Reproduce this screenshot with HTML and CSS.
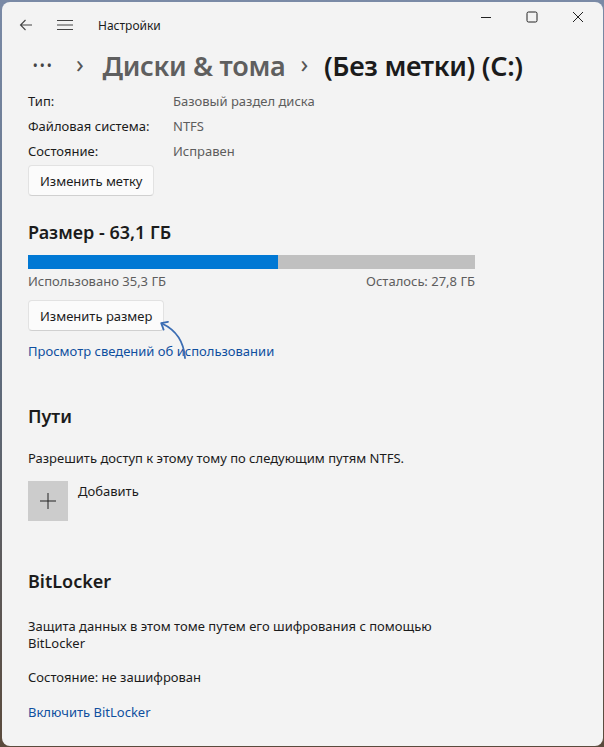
FILE: index.html
```html
<!DOCTYPE html>
<html lang="ru">
<head>
  <meta charset="UTF-8">
  <title>Настройки</title>
  <link rel="stylesheet" href="styles.css">
</head>
<body>
  <div class="window">
    <!-- Title bar -->
    <div class="titlebar">
      <svg class="tb-icon back" width="14" height="14" viewBox="0 0 14 14">
        <path d="M13 7H1.5M6.5 2L1.5 7l5 5" fill="none" stroke="#444" stroke-width="1.1"/>
      </svg>
      <svg class="tb-icon menu" width="16" height="12" viewBox="0 0 16 12">
        <path d="M0 1.5h16M0 6h16M0 10.5h16" fill="none" stroke="#444" stroke-width="1.1"/>
      </svg>
      <span class="app-title">Настройки</span>
      <div class="controls">
        <svg width="12" height="12" viewBox="0 0 12 12"><path d="M1 6.5h10" stroke="#222" stroke-width="1"/></svg>
        <svg width="12" height="12" viewBox="0 0 12 12"><rect x="1" y="1" width="10" height="10" rx="1.5" fill="none" stroke="#222" stroke-width="1"/></svg>
        <svg width="12" height="12" viewBox="0 0 12 12"><path d="M1 1l10 10M11 1L1 11" stroke="#222" stroke-width="1"/></svg>
      </div>
    </div>

    <!-- Breadcrumb -->
    <div class="breadcrumb">
      <span class="dots">•••</span>
      <span class="chev">›</span>
      <span class="crumb">Диски &amp; тома</span>
      <span class="chev chev-last">›</span>
      <span class="crumb current">(Без метки) (C:)</span>
    </div>

    <div class="content">
      <div class="scroll">
        <div class="props">
          <div class="prop"><span class="prop-name">Тип:</span><span class="prop-value">Базовый раздел диска</span></div>
          <div class="prop"><span class="prop-name">Файловая система:</span><span class="prop-value">NTFS</span></div>
          <div class="prop"><span class="prop-name">Состояние:</span><span class="prop-value">Исправен</span></div>
        </div>
        <button class="btn label-btn">Изменить метку</button>

        <h2 class="size-title">Размер - 63,1 ГБ</h2>
        <div class="bar"><div class="bar-used" style="width: 56%"></div></div>
        <div class="bar-labels">
          <span>Использовано 35,3 ГБ</span>
          <span>Осталось: 27,8 ГБ</span>
        </div>
        <div class="resize-row">
          <button class="btn">Изменить размер</button>
          <!-- hand-drawn pointer over the button corner -->
          <svg class="pointer" width="32" height="44" viewBox="0 0 32 44">
            <path d="M27 40C26 26 20 13 4 5.5" fill="none" stroke="#3b6db3" stroke-width="1.8" stroke-linecap="round"/>
            <path d="M10 3.8L3.2 5.2l2.4 6.4" fill="none" stroke="#3b6db3" stroke-width="1.8" stroke-linecap="round" stroke-linejoin="round"/>
          </svg>
        </div>
        <a class="link usage" href="#">Просмотр сведений об использовании</a>

        <h2 class="section">Пути</h2>
        <p class="text">Разрешить доступ к этому тому по следующим путям NTFS.</p>
        <div class="add-row">
          <div class="add-tile">
            <svg width="16" height="16" viewBox="0 0 16 16"><path d="M8 0v16M0 8h16" stroke="#222" stroke-width="1"/></svg>
          </div>
          <span>Добавить</span>
        </div>

        <h2 class="section bitlocker">BitLocker</h2>
        <p class="text">Защита данных в этом томе путем его шифрования с помощью BitLocker</p>
        <p class="text state">Состояние: не зашифрован</p>
        <a class="link enable" href="#">Включить BitLocker</a>
      </div>
    </div>
  </div>
</body>
</html>
```

FILE: styles.css
```css
body {
  margin: 0;
  height: 747px;
  overflow: hidden;
  background: linear-gradient(180deg, #7a8aa6 0%, #5f6e82 45%, #5a4a3c 100%);
  font-family: "Noto Sans", "Open Sans", sans-serif;
  color: #1b1b1b;
}

.window {
  margin: 2px 1px 0 2px;
  height: 744px;
  background: #f3f3f3;
  border-radius: 8px;
  overflow: hidden;
  display: flex;
  flex-direction: column;
}

/* Title bar */
.titlebar {
  height: 46px;
  display: flex;
  align-items: center;
  flex-shrink: 0;
}

.tb-icon {
  flex-shrink: 0;
}

.back {
  margin-left: 17px;
}

.menu {
  margin-left: 24px;
}

.app-title {
  margin-left: 25px;
  font-size: 12px;
  color: #1b1b1b;
}

.controls {
  margin-left: auto;
  align-self: flex-start;
  display: flex;
  gap: 34px;
  padding: 9px 19px 0 0;
}

/* Breadcrumb */
.breadcrumb {
  box-sizing: border-box;
  height: 48px;
  padding: 0 0 14px 31px;
  display: flex;
  align-items: center;
  flex-shrink: 0;
  font-size: 27px;
  font-weight: 600;
  color: #5f5f5f;
  letter-spacing: -0.3px;
}

.dots {
  font-size: 12px;
  letter-spacing: 2.5px;
  color: #444;
}

.chev {
  font-size: 25px;
  font-weight: 400;
  color: #555;
  margin: -4px 19px 0 22px;
}

.chev-last {
  margin: -4px 16px 0 15px;
}

.crumb {
  white-space: nowrap;
}

.crumb.current {
  color: #1b1b1b;
}

/* Content */
.content {
  flex: 1;
  overflow: hidden;
  padding: 0 26px;
}

.scroll {
  margin-top: -8px;
  font-size: 13px;
}

.prop {
  display: flex;
  height: 25px;
  align-items: center;
}

.prop-name {
  width: 145px;
}

.prop-value {
  color: #5d5d5d;
}

.btn {
  font-family: inherit;
  font-size: 13px;
  color: #1b1b1b;
  background: #fbfbfb;
  border: 1px solid #e2e2e2;
  border-bottom-color: #d0d0d0;
  border-radius: 4px;
  height: 31px;
  padding: 0 11px;
}

.label-btn {
  margin-top: 2px;
}

.size-title,
.section {
  font-size: 18px;
  font-weight: 600;
  margin: 0;
}

.size-title {
  margin-top: 24px;
}

.bar {
  margin-top: 11px;
  width: 447px;
  height: 14px;
  background: #c0c0c0;
}

.bar-used {
  height: 100%;
  background: #0078d4;
}

.bar-labels {
  width: 447px;
  display: flex;
  justify-content: space-between;
  color: #5d5d5d;
  margin-top: 3px;
}

.resize-row {
  position: relative;
  margin-top: 10px;
  height: 38px;
}

.pointer {
  position: absolute;
  left: 130px;
  top: 18px;
}

.link {
  display: block;
  color: #0f4f9f;
  text-decoration: none;
  font-size: 13px;
}

.usage {
  margin-top: 4px;
}

.section {
  margin-top: 44px;
}

.section.bitlocker {
  margin-top: 48px;
}

.text {
  margin: 22px 0 0;
  line-height: 17px;
  width: 440px;
}

.bitlocker + .text {
  margin-top: 25px;
}

.add-row {
  display: flex;
  align-items: flex-start;
  gap: 10px;
  margin-top: 14px;
}

.add-tile {
  width: 40px;
  height: 40px;
  background: #cccccc;
  display: flex;
  align-items: center;
  justify-content: center;
}

.add-row span {
  margin-top: 1px;
}

.state {
  margin-top: 17px;
}

.enable {
  margin-top: 17px;
}
```
